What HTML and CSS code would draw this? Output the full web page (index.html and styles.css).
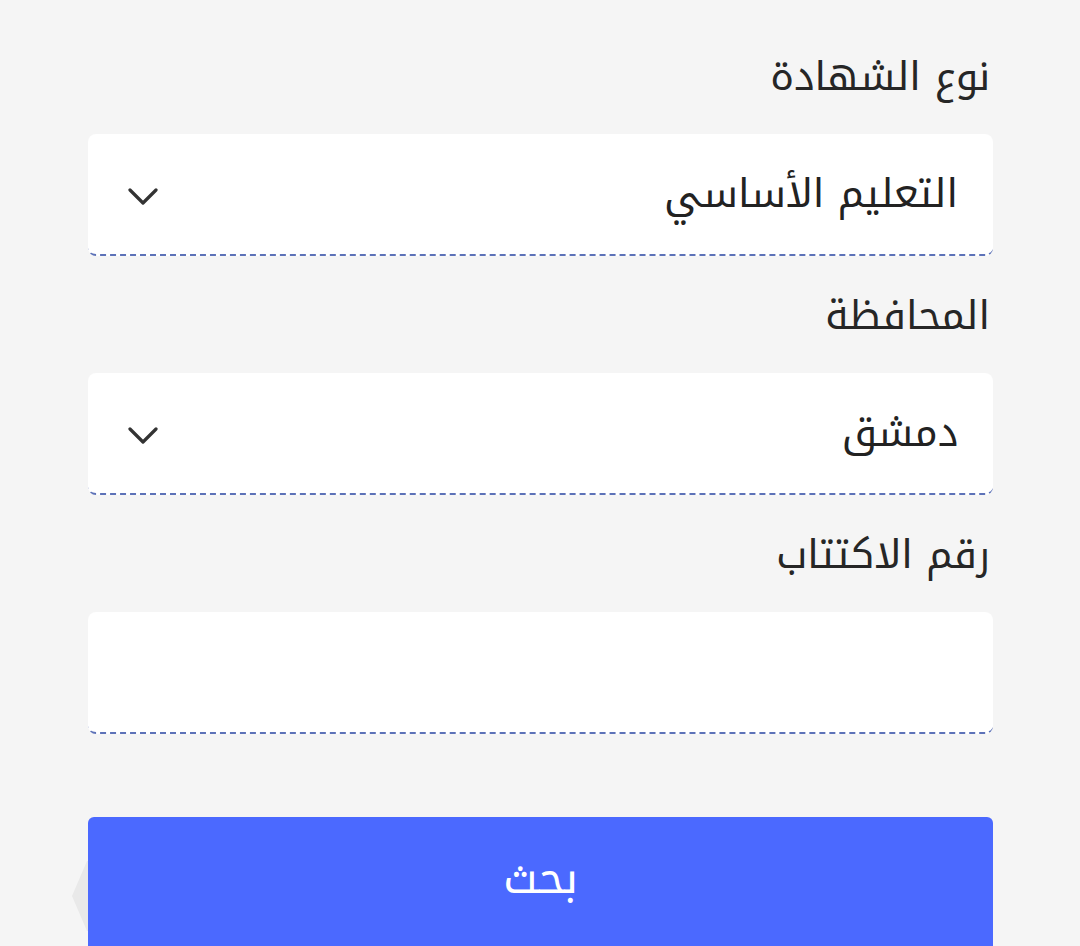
FILE: index.html
```html
<!DOCTYPE html>
<html lang="ar" dir="rtl">
<head>
<meta charset="utf-8">
<title>بحث</title>
<link rel="stylesheet" href="styles.css">
</head>
<body>
<main class="form">
  <div class="group">
    <label class="label">نوع الشهادة</label>
    <div class="field">
      <span class="value">التعليم الأساسي</span>
      <svg class="chev" viewBox="0 0 30 18" width="30" height="18"><path d="M2 2 L15 15 L28 2" fill="none" stroke="#333" stroke-width="3.2" stroke-linecap="round" stroke-linejoin="round"/></svg>
    </div>
  </div>
  <div class="group">
    <label class="label">المحافظة</label>
    <div class="field">
      <span class="value">دمشق</span>
      <svg class="chev" viewBox="0 0 30 18" width="30" height="18"><path d="M2 2 L15 15 L28 2" fill="none" stroke="#333" stroke-width="3.2" stroke-linecap="round" stroke-linejoin="round"/></svg>
    </div>
  </div>
  <div class="group">
    <label class="label">رقم الاكتتاب</label>
    <div class="field"></div>
  </div>
  <div class="btn-wrap">
    <div class="tab"></div>
    <button class="btn">بحث</button>
  </div>
</main>
</body>
</html>
```
FILE: styles.css
```css
html, body {
  margin: 0;
  padding: 0;
  background: #f5f5f5;
  height: 946px;
  overflow: hidden;
}
body {
  font-family: "Noto Kufi Arabic", "Noto Sans Arabic", "DejaVu Sans", sans-serif;
  color: #222;
}
.form {
  padding: 50px 87px 0 88px;
  display: flex;
  flex-direction: column;
}
.group {
  display: flex;
  flex-direction: column;
}
.label {
  display: block;
  font-size: 40px;
  line-height: 54px;
  height: 50px;
  padding: 0 3px 0 0;
  margin-bottom: 34px;
  color: #262626;
}
.field {
  height: 120px;
  background: #fff;
  border-radius: 8px;
  border-bottom: 2px dashed #5d72b8;
  display: flex;
  align-items: center;
  justify-content: space-between;
  padding: 0 35px 0 40px;
  margin-bottom: 33px;
}
.value {
  font-size: 40px;
  color: #222;
}
.chev {
  display: block;
  margin-top: 6px;
}
.btn-wrap {
  position: relative;
  margin-top: 50px;
}
.tab {
  position: absolute;
  left: -16px;
  top: 44px;
  width: 30px;
  height: 70px;
  background: #e9e9e9;
  clip-path: polygon(50% 0, 100% 0, 100% 100%, 50% 100%, 0 50%);
}
.btn {
  position: relative;
  display: block;
  width: 100%;
  height: 140px;
  border: none;
  border-radius: 6px;
  background: #4b69ff;
  color: #fff;
  font-family: "Noto Kufi Arabic", "Noto Sans Arabic", "DejaVu Sans", sans-serif;
  font-size: 44px;
  padding: 0 0 18px 0;
}
```
